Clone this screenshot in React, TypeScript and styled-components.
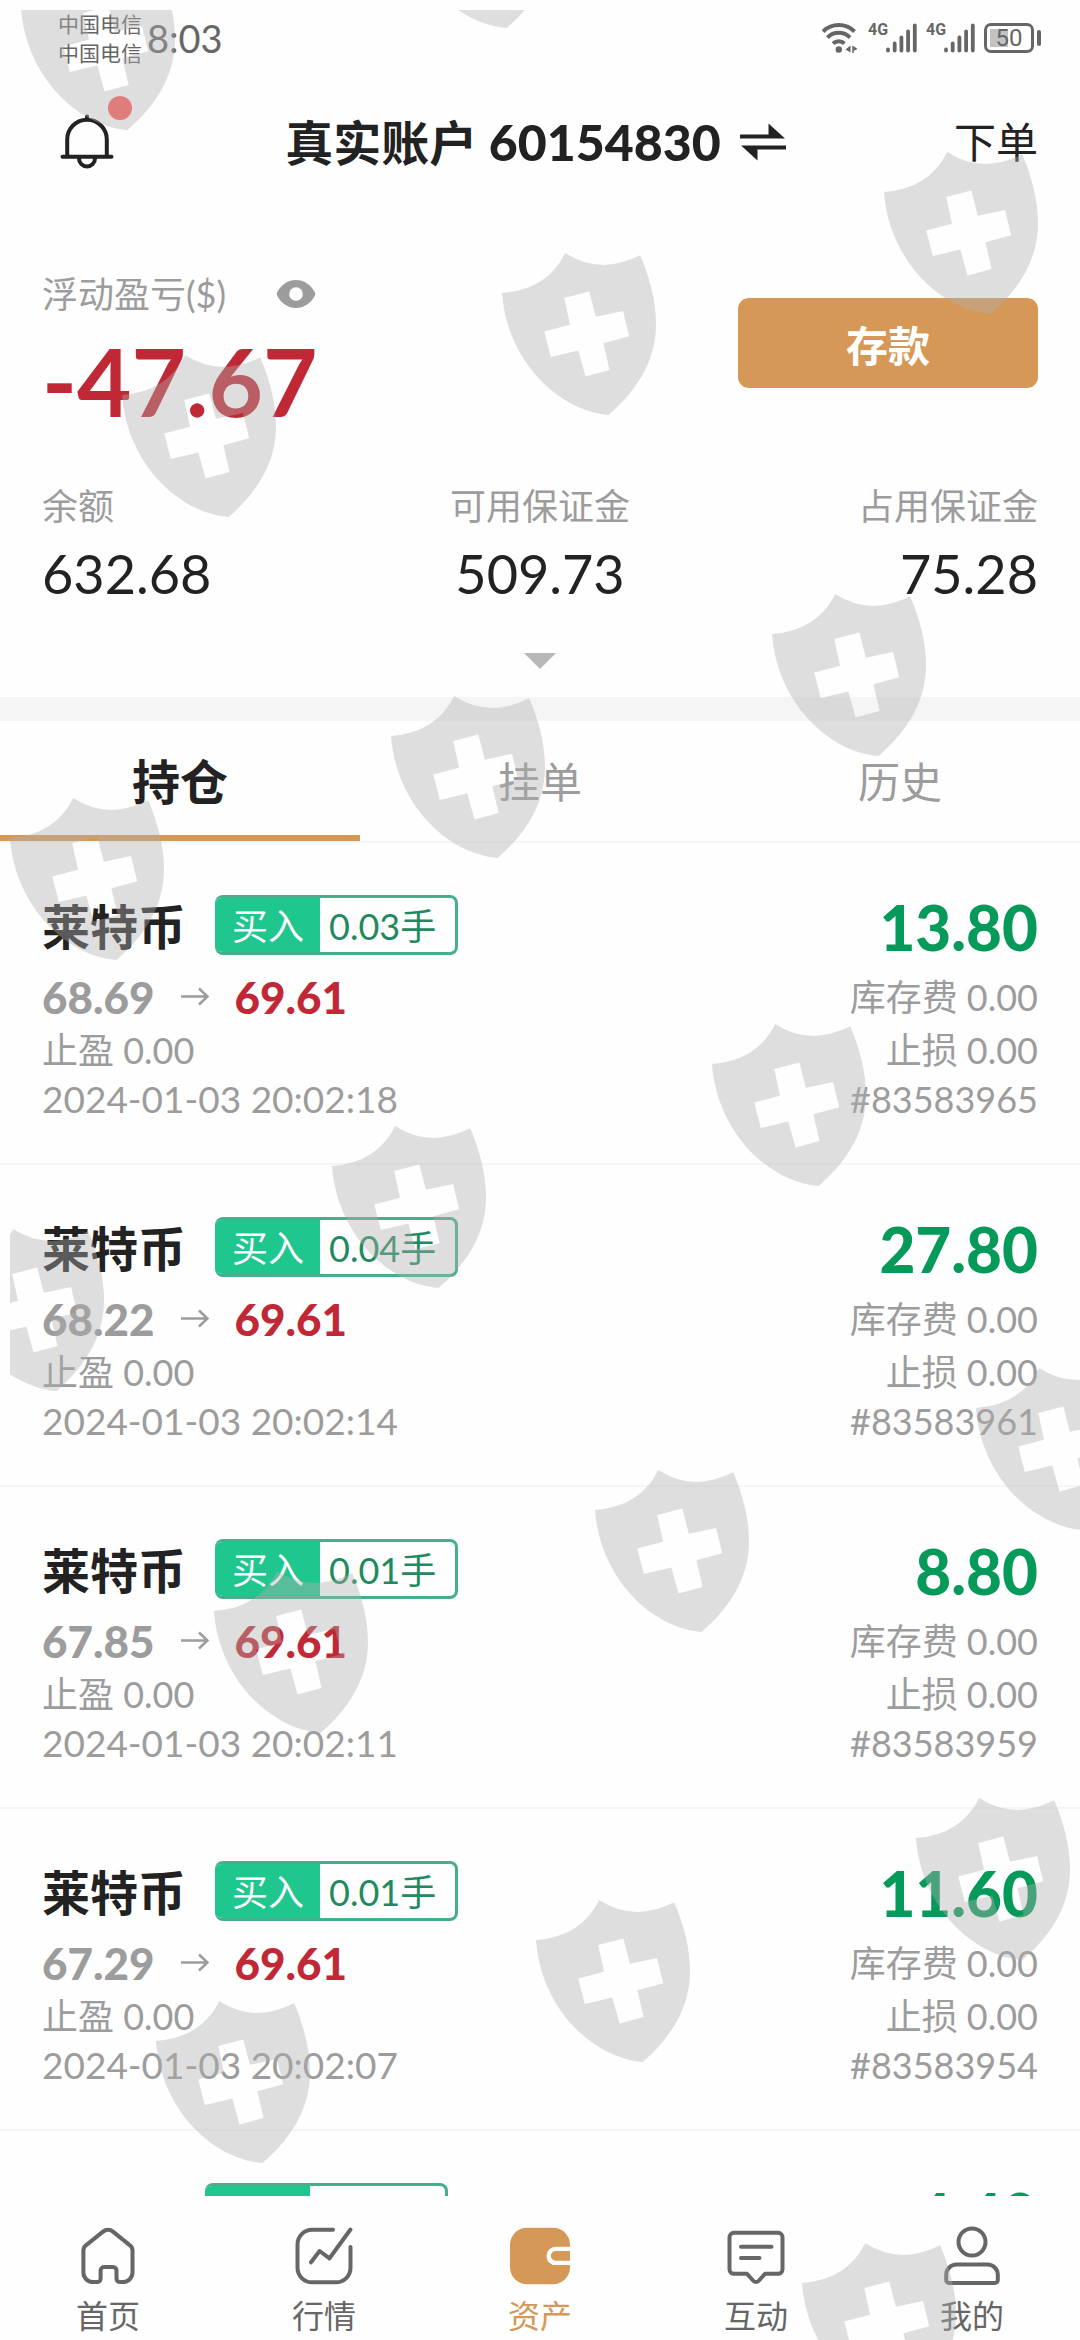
import React from 'react';
import styled, { createGlobalStyle, css } from 'styled-components';

const ink = '#222222';
const muted = '#9c9c9c';
const slate = '#666666';
const gold = '#d59857';
const red = '#c12836';
const green = '#069a5a';
const line = '#f5f5f5';

const GlobalStyle = createGlobalStyle`
  *, *::before, *::after { box-sizing: border-box; }
  body {
    margin: 0;
    background: #fefefe;
    color: ${ink};
    font-family: Lato, 'Noto Sans CJK SC', 'Noto Sans', sans-serif;
    font-size: 36px;
  }
  button { font: inherit; color: inherit; background: none; border: 0; padding: 0; cursor: pointer; }
  a { color: inherit; text-decoration: none; }
  ul { list-style: none; margin: 0; padding: 0; }
  h1, h2, p { margin: 0; font-size: inherit; font-weight: inherit; }
  svg { display: block; flex: none; }
`;

const Screen = styled.div`
  position: relative;
  display: flex;
  flex-direction: column;
  height: 100vh;
  overflow: hidden;
`;

/* status bar */
const StatusBar = styled.div`
  display: flex;
  align-items: center;
  justify-content: space-between;
  height: 76px;
  padding: 0 39px 0 58px;
  color: ${slate};
`;
const StatusGroup = styled.div<{ $gap: number }>`
  display: flex;
  align-items: center;
  gap: ${(p) => p.$gap}px;
`;
const Carriers = styled.div`
  font-size: 21px;
  line-height: 29px;
`;
const Clock = styled.time`
  font-size: 38px;
  line-height: 76px;
`;
const Signal = styled.div`
  display: flex;
  align-items: flex-start;
`;
const Network = styled.span`
  width: 18px;
  font-family: 'Liberation Sans Narrow', Roboto, sans-serif;
  font-size: 16px;
  font-weight: 700;
  line-height: 14px;
`;
const Battery = styled.div`
  display: flex;
  align-items: center;
  gap: 3px;
  &::after {
    content: '';
    width: 4px;
    height: 16px;
    border-radius: 2px;
    background: ${slate};
  }
`;
const Cell = styled.div`
  width: 50px;
  height: 30px;
  border: 3px solid ${slate};
  border-radius: 7px;
  background: linear-gradient(#c2c2c2, #c2c2c2) 3px 3px / 18px 18px no-repeat;
  font-family: 'Liberation Sans Narrow', Roboto, sans-serif;
  font-size: 24px;
  line-height: 25px;
  text-align: center;
`;

/* header */
const Header = styled.header`
  display: flex;
  align-items: center;
  justify-content: space-between;
  height: 132px;
  padding: 0 42px 0 57px;
`;
const BellButton = styled.button`
  position: relative;
`;
const Dot = styled.span`
  position: absolute;
  top: -16px;
  right: -15px;
  width: 24px;
  height: 24px;
  border-radius: 50%;
  background: #ff5a5a;
`;
const AccountButton = styled.button`
  display: flex;
  align-items: center;
  gap: 19px;
  font-size: 48px;
  font-weight: 700;
  line-height: 60px;
`;
const AccountNumber = styled.span`
  font-size: 50px;
  font-weight: 900;
`;
const OrderLink = styled.a`
  font-size: 42px;
  line-height: 60px;
`;

/* account summary */
const Summary = styled.section`
  padding: 58px 42px 28px;
`;
const SummaryTop = styled.div`
  display: flex;
  align-items: center;
  justify-content: space-between;
`;
const LabelRow = styled.div`
  display: flex;
  align-items: center;
  gap: 50px;
  line-height: 56px;
  color: ${muted};
`;
const Floating = styled.p`
  margin-top: 20px;
  font-size: 94px;
  font-weight: 700;
  line-height: 78px;
  color: ${red};
`;
const Deposit = styled.button`
  width: 300px;
  height: 90px;
  border-radius: 11px;
  background: ${gold};
  color: #ffffff;
  font-size: 42px;
  font-weight: 700;
`;
const Stats = styled.dl`
  display: grid;
  grid-template-columns: repeat(3, 1fr);
  margin: 61px 0 0;
`;
const Stat = styled.div<{ $align: string }>`
  text-align: ${(p) => p.$align};
  dt {
    line-height: 50px;
    color: ${muted};
  }
  dd {
    margin: 8px 0 0;
    font-size: 54px;
    line-height: 70px;
  }
`;
const Expand = styled.button`
  display: block;
  margin: 44px auto 0;
`;

/* tabs */
const Tabs = styled.div`
  display: grid;
  grid-template-columns: repeat(3, 1fr);
  flex: none;
  border-top: 24px solid ${line};
  border-bottom: 2px solid ${line};
`;
const Tab = styled.button<{ $active: boolean }>`
  height: 120px;
  padding-top: 2px;
  border-bottom: 6px solid transparent;
  font-size: 42px;
  color: ${muted};
  ${(p) =>
    p.$active &&
    css`
      border-color: ${gold};
      font-size: 48px;
      font-weight: 700;
      color: ${ink};
    `}
`;

/* positions */
const List = styled.ul`
  flex: 1;
  min-height: 0;
  overflow: hidden;
`;
const Position = styled.li`
  padding: 52px 42px 40px;
  border-bottom: 2px solid ${line};
`;
const Line = styled.div<{ $height: number }>`
  display: flex;
  align-items: center;
  justify-content: space-between;
  height: ${(p) => p.$height}px;
  line-height: ${(p) => p.$height}px;
  color: ${muted};
`;
const TitleLine = styled(Line)`
  margin-bottom: 10px;
`;
const Instrument = styled.div`
  display: flex;
  align-items: flex-start;
  gap: 29px;
`;
const Name = styled.h2`
  font-size: 48px;
  font-weight: 700;
  color: ${ink};
`;
const Tag = styled.div`
  display: flex;
  height: 60px;
  border: 3px solid #45ae8b;
  border-left: 0;
  border-radius: 8px;
  overflow: hidden;
  line-height: 56px;
`;
const Side = styled.span`
  margin: -3px 0;
  padding: 3px 16px 3px 17px;
  background: #1fc68d;
  color: #ffffff;
`;
const Lots = styled.span`
  padding: 0 19px 0 9px;
  color: #1f8a5e;
`;
const Profit = styled.strong`
  font-size: 62px;
  font-weight: 900;
  color: ${green};
`;
const Prices = styled.div`
  display: flex;
  align-items: center;
  gap: 26px;
  font-size: 44px;
  font-weight: 900;
`;
const Current = styled.span`
  color: ${red};
`;
const OpenedAt = styled.time`
  font-size: 37px;
`;

/* bottom navigation */
const Nav = styled.nav`
  display: grid;
  grid-template-columns: repeat(5, 1fr);
  flex: none;
  padding-top: 30px;
  background: #fefefe;
`;
const NavLink = styled.a<{ $active?: boolean }>`
  display: flex;
  flex-direction: column;
  align-items: center;
  gap: 6px;
  font-size: 32px;
  line-height: 48px;
  color: ${(p) => (p.$active ? gold : slate)};
`;

/* watermark laid over the whole screen */
const Watermark = styled.div`
  position: absolute;
  inset: 10px 0 0 10px;
  overflow: hidden;
  pointer-events: none;
`;
const Shield = styled.svg<{ $x: number; $y: number }>`
  position: absolute;
  left: ${(p) => p.$x - 10}px;
  top: ${(p) => p.$y - 10}px;
  width: 154px;
  height: 162px;
  fill: rgba(175, 175, 175, 0.4);
`;

const shields = [
  [21, -32], [400, -134],
  [884, 152], [502, 253], [122, 355],
  [772, 594], [391, 696], [10, 798],
  [712, 1024], [332, 1126], [-50, 1229],
  [976, 1368], [595, 1470], [214, 1571],
  [916, 1798], [536, 1900], [156, 2001],
  [802, 2243],
];

const positions = [
  { id: '83583965', name: '莱特币', lots: '0.03', open: '68.69', now: '69.61', profit: '13.80', time: '2024-01-03 20:02:18' },
  { id: '83583961', name: '莱特币', lots: '0.04', open: '68.22', now: '69.61', profit: '27.80', time: '2024-01-03 20:02:14' },
  { id: '83583959', name: '莱特币', lots: '0.01', open: '67.85', now: '69.61', profit: '8.80', time: '2024-01-03 20:02:11' },
  { id: '83583954', name: '莱特币', lots: '0.01', open: '67.29', now: '69.61', profit: '11.60', time: '2024-01-03 20:02:07' },
];

const stroke = {
  fill: 'none',
  stroke: 'currentColor',
  strokeWidth: 4,
  strokeLinecap: 'round' as const,
  strokeLinejoin: 'round' as const,
};

const HomeIcon = () => (
  <svg width="60" height="60" viewBox="0 0 60 60" {...stroke}>
    <path d="M26 41h9a3.500 3.500 0 0 1 3.500 3.500v8a3.500 3.500 0 0 0 3.500 3.500h3a9.500 9.500 0 0 0 9.500-9.500V24.500c0-2-.6-3.600-2.200-4.900L35 5.600a8 8 0 0 0-10 0L7.600 19.600C6 20.900 5.400 22.500 5.400 24.500v22a9.500 9.500 0 0 0 9.500 9.500h4.200a3.500 3.500 0 0 0 3.500-3.500v-8A3.500 3.500 0 0 1 26 41z" />
  </svg>
);
const MarketIcon = () => (
  <svg width="60" height="60" viewBox="0 0 60 60" {...stroke}>
    <path d="M39 3.800H18A14.500 14.500 0 0 0 3.500 18.300v23.500A14.500 14.500 0 0 0 18 56.300h24a14.500 14.500 0 0 0 14.500-14.500V21" />
    <path d="M17 36.300 25.600 25l9.900 7.300L56.500 3.500" />
  </svg>
);
const WalletIcon = () => (
  <svg width="60" height="60" viewBox="0 0 60 60">
    <rect y="1.700" width="60" height="56.600" rx="17" fill={gold} />
    <path d="M61 22.900H45.600a7 7 0 0 0 0 14H61" fill="none" stroke="#fff" strokeWidth="4.400" />
  </svg>
);
const ChatIcon = () => (
  <svg width="60" height="60" viewBox="0 0 60 60" {...stroke}>
    <path d="M8 6.800h44a4.500 4.500 0 0 1 4.500 4.500v32a4.500 4.500 0 0 1-4.500 4.500H39l-6.500 7.200a3.400 3.400 0 0 1-5 0L21 47.800H8a4.500 4.500 0 0 1-4.500-4.500v-32A4.500 4.500 0 0 1 8 6.800zM15 20.700h30.500M15 31.900h18.500" />
  </svg>
);
const UserIcon = () => (
  <svg width="60" height="60" viewBox="0 0 60 60" {...stroke}>
    <circle cx="30" cy="16" r="13.500" />
    <path d="M14.500 38.500h31A10.300 10.300 0 0 1 55.800 48.800v5.200a3 3 0 0 1-3 3H7.200a3 3 0 0 1-3-3v-5.200A10.300 10.300 0 0 1 14.500 38.500z" />
  </svg>
);
const BellIcon = () => (
  <svg width="60" height="60" viewBox="0 0 60 60" {...stroke}>
    <path d="M10.200 44.500V27.500a19.800 19.800 0 0 1 39.600 0v17M5.500 44.800h49M22 46.500a8 8 0 0 0 16 0M30 4.500V7" />
  </svg>
);
const SwapIcon = () => (
  <svg width="46" height="38" viewBox="0 0 46 38" fill={ink}>
    <path d="M0 11.400h28.500V.5l16.500 14.900H0zM46 26.400H17.500V37.500L1 22.500h45z" />
  </svg>
);
const EyeIcon = () => (
  <svg width="40" height="30" viewBox="0 0 40 30">
    <path d="M1.200 13.200C5.500 5.500 12 1 20 1s14.500 4.500 18.800 12.200q1 1.800 0 3.600C34.500 24.500 28 29 20 29S5.500 24.500 1.200 16.800q-1-1.800 0-3.600z" fill={muted} />
    <circle cx="20" cy="15" r="6.800" fill="#fff" />
  </svg>
);
const ArrowIcon = () => (
  <svg width="28" height="20" viewBox="0 0 28 20" fill="none" stroke={muted} strokeWidth="2.500">
    <path d="M0 9.500h26M18 1.500l8.500 8-8.500 8" />
  </svg>
);
const WifiIcon = () => (
  <svg width="37" height="32" viewBox="0 0 37 32" fill="none" stroke={slate} strokeWidth="4">
    <path d="M1 9.500a22.500 22.500 0 0 1 31.500 0M5.500 15.700a15.500 15.500 0 0 1 22.500 0M11 21.500a8.500 8.500 0 0 1 11.500 0" />
    <circle cx="16.800" cy="27.500" r="3.200" fill={slate} stroke="none" />
    <path d="M28.500 23.500v7l-5-3zM31.500 24l4 3-4 2z" fill={slate} stroke="none" />
    <path d="M31 24v7" strokeWidth="1.500" />
  </svg>
);
const SignalIcon = () => (
  <svg width="31" height="30" viewBox="0 0 31 30" stroke={slate} strokeWidth="3.800" strokeLinecap="round">
    <path d="M2 26.500v1M8.700 20.500v7M15.400 14.500v13M22.100 8.300v19.200M28.800 2.500v25" />
  </svg>
);

const nav = [
  { label: '首页', icon: <HomeIcon /> },
  { label: '行情', icon: <MarketIcon /> },
  { label: '资产', icon: <WalletIcon />, active: true },
  { label: '互动', icon: <ChatIcon /> },
  { label: '我的', icon: <UserIcon /> },
];

export default function App() {
  return (
    <Screen>
      <GlobalStyle />
      <StatusBar>
        <StatusGroup $gap={5}>
          <Carriers>
            <div>中国电信</div>
            <div>中国电信</div>
          </Carriers>
          <Clock>8:03</Clock>
        </StatusGroup>
        <StatusGroup $gap={9}>
          <WifiIcon />
          <Signal><Network>4G</Network><SignalIcon /></Signal>
          <Signal><Network>4G</Network><SignalIcon /></Signal>
          <Battery><Cell>50</Cell></Battery>
        </StatusGroup>
      </StatusBar>

      <Header>
        <BellButton aria-label="通知"><BellIcon /><Dot /></BellButton>
        <AccountButton>
          <span>真实账户 <AccountNumber>60154830</AccountNumber></span>
          <SwapIcon />
        </AccountButton>
        <OrderLink href="#order">下单</OrderLink>
      </Header>

      <Summary>
        <SummaryTop>
          <div>
            <LabelRow>
              <span>浮动盈亏($)</span>
              <button aria-label="显示或隐藏"><EyeIcon /></button>
            </LabelRow>
            <Floating>-47.67</Floating>
          </div>
          <Deposit>存款</Deposit>
        </SummaryTop>
        <Stats>
          <Stat $align="left"><dt>余额</dt><dd>632.68</dd></Stat>
          <Stat $align="center"><dt>可用保证金</dt><dd>509.73</dd></Stat>
          <Stat $align="right"><dt>占用保证金</dt><dd>75.28</dd></Stat>
        </Stats>
        <Expand aria-label="展开">
          <svg width="32" height="16" viewBox="0 0 32 16" fill="#b8b8b8"><path d="M0 0h32L16 16z" /></svg>
        </Expand>
      </Summary>

      <Tabs role="tablist">
        <Tab role="tab" aria-selected $active>持仓</Tab>
        <Tab role="tab" $active={false}>挂单</Tab>
        <Tab role="tab" $active={false}>历史</Tab>
      </Tabs>

      <List>
        {positions.map((p) => (
          <Position key={p.id}>
            <TitleLine $height={64}>
              <Instrument>
                <Name>{p.name}</Name>
                <Tag><Side>买入</Side><Lots>{p.lots}手</Lots></Tag>
              </Instrument>
              <Profit>{p.profit}</Profit>
            </TitleLine>
            <Line $height={56}>
              <Prices><span>{p.open}</span><ArrowIcon /><Current>{p.now}</Current></Prices>
              <span>库存费 0.00</span>
            </Line>
            <Line $height={50}><span>止盈 0.00</span><span>止损 0.00</span></Line>
            <Line $height={48}><OpenedAt>{p.time}</OpenedAt><span>#{p.id}</span></Line>
          </Position>
        ))}
        <Position>
          <TitleLine $height={64}>
            <Instrument>
              <Name>JP225</Name>
              <Tag><Side>买入</Side><Lots>0.01手</Lots></Tag>
            </Instrument>
            <Profit>4.40</Profit>
          </TitleLine>
        </Position>
      </List>

      <Nav>
        {nav.map((n) => (
          <NavLink key={n.label} href={`#${n.label}`} $active={n.active}>
            {n.icon}
            <span>{n.label}</span>
          </NavLink>
        ))}
      </Nav>

      <Watermark aria-hidden="true">
        {shields.map(([x, y]) => (
          <Shield key={`${x},${y}`} $x={x} $y={y} viewBox="0 0 448 487" preserveAspectRatio="none">
            <path
              fillRule="evenodd"
              d="M0 120Q131 111 184 0Q285 68 402 7C430 75 448 145 448 215C448 335 380 425 310 487C165 475 14 325 0 120ZM181 135L254 116L273 192L352 174L370 250L295 271L313 352L243 371L222 293L142 313L123 236L198 216Z"
            />
          </Shield>
        ))}
      </Watermark>
    </Screen>
  );
}
